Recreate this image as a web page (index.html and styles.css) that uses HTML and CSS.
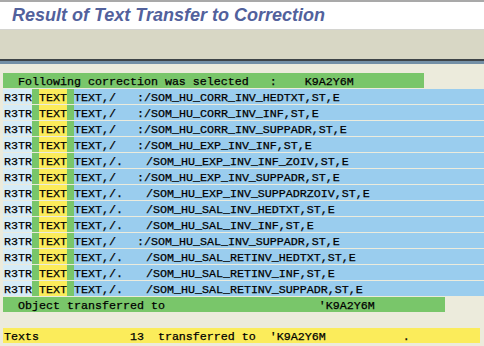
FILE: index.html
```
<!DOCTYPE html>
<html lang="en">
<head>
    <meta charset="UTF-8">
    <meta name="viewport" content="width=device-width, initial-scale=1.0">
    <title>Result of Text Transfer to Correction</title>
    <link rel="stylesheet" href="styles.css">
</head>
<body>
    <div class="title-bar">
        <h1 class="title">Result of Text Transfer to Correction</h1>
    </div>
    <div class="toolbar"></div>

    <div class="list">
        <div class="line head">  Following correction was selected   :    K9A2Y6M</div>

        <div class="row"><span class="c-obj">R3TR</span><span class="c-sep"></span><span class="c-type">TEXT</span><span class="c-sep"></span><span class="c-name">TEXT,/   :/SOM_HU_CORR_INV_HEDTXT,ST,E</span></div>
        <div class="row"><span class="c-obj">R3TR</span><span class="c-sep"></span><span class="c-type">TEXT</span><span class="c-sep"></span><span class="c-name">TEXT,/   :/SOM_HU_CORR_INV_INF,ST,E</span></div>
        <div class="row"><span class="c-obj">R3TR</span><span class="c-sep"></span><span class="c-type">TEXT</span><span class="c-sep"></span><span class="c-name">TEXT,/   :/SOM_HU_CORR_INV_SUPPADR,ST,E</span></div>
        <div class="row"><span class="c-obj">R3TR</span><span class="c-sep"></span><span class="c-type">TEXT</span><span class="c-sep"></span><span class="c-name">TEXT,/   :/SOM_HU_EXP_INV_INF,ST,E</span></div>
        <div class="row"><span class="c-obj">R3TR</span><span class="c-sep"></span><span class="c-type">TEXT</span><span class="c-sep"></span><span class="c-name">TEXT,/.   <span class="shift">/SOM_HU_EXP_INV_INF_ZOIV,ST,E</span></span></div>
        <div class="row"><span class="c-obj">R3TR</span><span class="c-sep"></span><span class="c-type">TEXT</span><span class="c-sep"></span><span class="c-name">TEXT,/   :/SOM_HU_EXP_INV_SUPPADR,ST,E</span></div>
        <div class="row"><span class="c-obj">R3TR</span><span class="c-sep"></span><span class="c-type">TEXT</span><span class="c-sep"></span><span class="c-name">TEXT,/.   <span class="shift">/SOM_HU_EXP_INV_SUPPADRZOIV,ST,E</span></span></div>
        <div class="row"><span class="c-obj">R3TR</span><span class="c-sep"></span><span class="c-type">TEXT</span><span class="c-sep"></span><span class="c-name">TEXT,/.   <span class="shift">/SOM_HU_SAL_INV_HEDTXT,ST,E</span></span></div>
        <div class="row"><span class="c-obj">R3TR</span><span class="c-sep"></span><span class="c-type">TEXT</span><span class="c-sep"></span><span class="c-name">TEXT,/.   <span class="shift">/SOM_HU_SAL_INV_INF,ST,E</span></span></div>
        <div class="row"><span class="c-obj">R3TR</span><span class="c-sep"></span><span class="c-type">TEXT</span><span class="c-sep"></span><span class="c-name">TEXT,/   :/SOM_HU_SAL_INV_SUPPADR,ST,E</span></div>
        <div class="row"><span class="c-obj">R3TR</span><span class="c-sep"></span><span class="c-type">TEXT</span><span class="c-sep"></span><span class="c-name">TEXT,/.   <span class="shift">/SOM_HU_SAL_RETINV_HEDTXT,ST,E</span></span></div>
        <div class="row"><span class="c-obj">R3TR</span><span class="c-sep"></span><span class="c-type">TEXT</span><span class="c-sep"></span><span class="c-name">TEXT,/.   <span class="shift">/SOM_HU_SAL_RETINV_INF,ST,E</span></span></div>
        <div class="row"><span class="c-obj">R3TR</span><span class="c-sep"></span><span class="c-type">TEXT</span><span class="c-sep"></span><span class="c-name">TEXT,/.   <span class="shift">/SOM_HU_SAL_RETINV_SUPPADR,ST,E</span></span></div>

        <div class="line done">  Object transferred to                      'K9A2Y6M</div>

        <div class="line total">Texts             13  transferred to  'K9A2Y6M           .</div>
    </div>
</body>
</html>
```

FILE: styles.css
```
* {
    box-sizing: border-box;
}

html, body {
    margin: 0;
    padding: 0;
    width: 100%;
    height: 100vh;
    overflow: hidden;
    background-color: #ecebdc;
}

.title-bar {
    height: 30px;
    background-color: #fff;
    border-top: 2px solid #a9a9a9;
    border-bottom: 1px solid #d4d4d0;
    padding-left: 12px;
}

.title {
    margin: 0;
    font-family: 'Liberation Sans', Arial, sans-serif;
    font-size: 18px;
    font-weight: bold;
    font-style: italic;
    line-height: 27px;
    color: #52619c;
}

.toolbar {
    height: 34px;
    background-color: #d8d7c5;
    border-bottom: 3px solid #7490a6;
    box-shadow: inset 0 -2px 0 #3e4448;
}

.list {
    display: flex;
    flex-direction: column;
    align-items: flex-start;
    gap: 1px;
    padding: 9px 0 0 3px;
    font-family: 'Courier New', 'Liberation Mono', monospace;
    font-size: 11.67px;
    color: #000;
    -webkit-text-stroke: 0.25px #000;
    white-space: pre;
}

.line,
.row > span {
    height: 15px;
    line-height: 15px;
    padding-top: 2px;
    overflow: hidden;
}

.line {
    padding-left: 1px;
}

.head {
    width: 421px;
    background-color: #79c66a;
}

.row {
    display: flex;
    align-self: stretch;
}

.c-obj {
    width: 29px;
    padding-left: 1px;
    background-color: #d6ecf7;
}

.c-sep {
    width: 7px;
    background-color: #79c66a;
}

.c-type {
    width: 28px;
    background-color: #fbec5b;
}

.c-name {
    flex: 1;
    background-color: #9acdee;
}

.shift {
    padding-left: 2px;
}

.done {
    width: 442px;
    background-color: #79c66a;
}

.total {
    width: 477px;
    margin-top: 15px;
    background-color: #fbec5b;
}
```
